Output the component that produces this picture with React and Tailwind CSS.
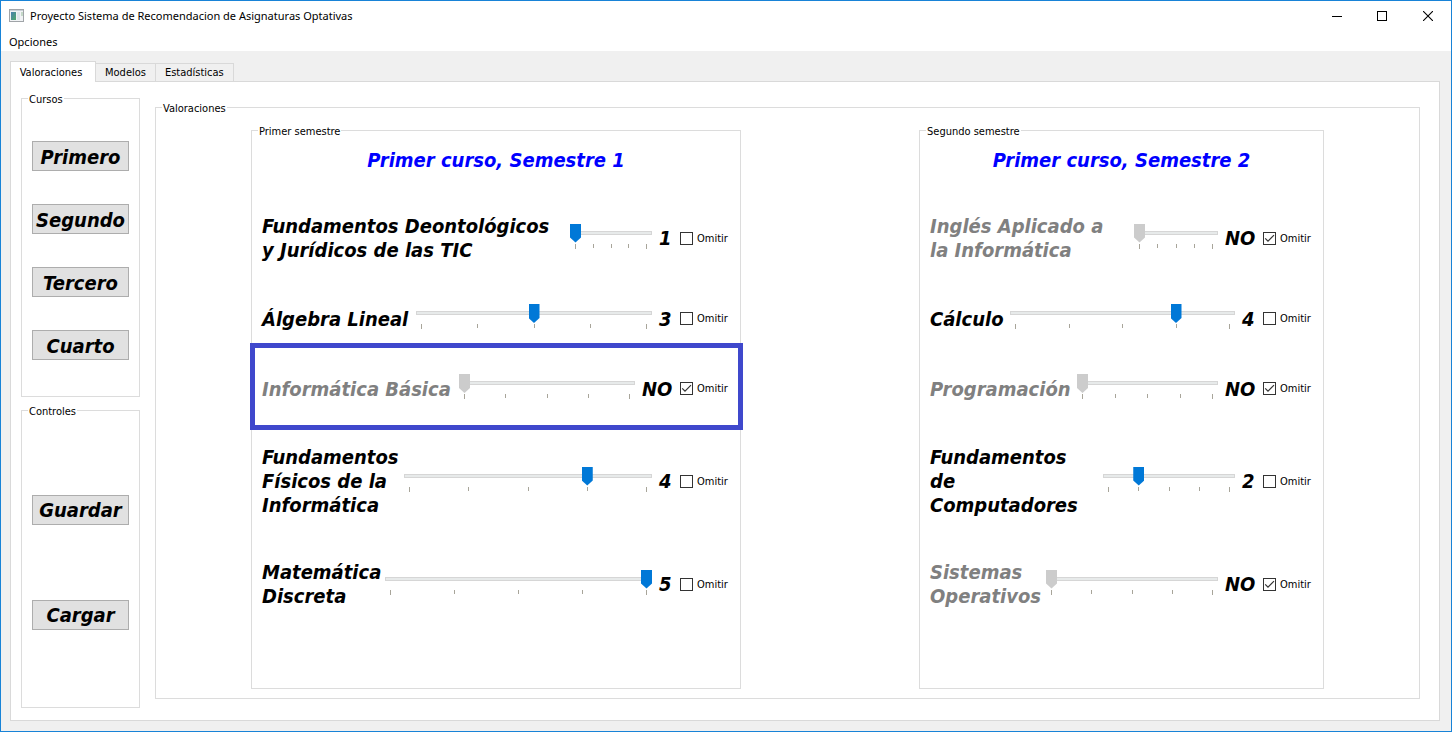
import { useState } from "react";

const COURSES = ["Primero", "Segundo", "Tercero", "Cuarto"];
const CONTROLS = ["Guardar", "Cargar"];
const TABS = ["Valoraciones", "Modelos", "Estadísticas"];

const FIRST_SEMESTER = [
  { id: "deontologia", lines: ["Fundamentos Deontológicos", "y Jurídicos de las TIC"], width: "w-[301px]", value: 1 },
  { id: "algebra", lines: ["Álgebra Lineal"], width: "w-[147px]", value: 3 },
  { id: "informatica", lines: ["Informática Básica"], width: "w-[190px]", value: 1, skipped: true, highlighted: true },
  { id: "fisica", lines: ["Fundamentos", "Físicos de la", "Informática"], width: "w-[135px]", value: 4 },
  { id: "discreta", lines: ["Matemática", "Discreta"], width: "w-[116px]", value: 5 },
];

const SECOND_SEMESTER = [
  { id: "ingles", lines: ["Inglés Aplicado a", "la Informática"], width: "w-[197px]", value: 1, skipped: true },
  { id: "calculo", lines: ["Cálculo"], width: "w-[73px]", value: 4 },
  { id: "programacion", lines: ["Programación"], width: "w-[140px]", value: 1, skipped: true },
  { id: "computadores", lines: ["Fundamentos", "de", "Computadores"], width: "w-[166px]", value: 2 },
  { id: "operativos", lines: ["Sistemas", "Operativos"], width: "w-[109px]", value: 1, skipped: true },
];

function GroupBox({ title, className = "", children }) {
  return (
    <fieldset className={`min-w-0 border border-[#dcdcdc] ${className}`}>
      <legend className="ml-[6px] h-[15px] px-px text-[11px] leading-[17px]">{title}</legend>
      {children}
    </fieldset>
  );
}

function BigButton({ children }) {
  return (
    <button
      type="button"
      className="flex h-[30px] w-full items-center justify-center border border-[#adadad] bg-[#e1e1e1] pt-px text-[20px] leading-[24px] font-bold whitespace-nowrap italic"
    >
      {children}
    </button>
  );
}

function Slider({ id, value, disabled, onChange }) {
  return (
    <div className="-mt-1 h-[25px] min-w-0 flex-1">
      <input
        id={id}
        type="range"
        min="1"
        max="5"
        value={value}
        disabled={disabled}
        onChange={(e) => onChange(Number(e.target.value))}
        className="block h-[18px] w-full appearance-none bg-transparent [&::-webkit-slider-runnable-track]:h-[4px] [&::-webkit-slider-runnable-track]:bg-[#e7eaea] [&::-webkit-slider-runnable-track]:shadow-[inset_0_0_0_1px_#d6d6d6] [&::-webkit-slider-thumb]:-mt-[7px] [&::-webkit-slider-thumb]:h-[19px] [&::-webkit-slider-thumb]:w-[11px] [&::-webkit-slider-thumb]:appearance-none [&::-webkit-slider-thumb]:bg-[#0078d7] [&::-webkit-slider-thumb]:[clip-path:polygon(0_0,100%_0,100%_74%,50%_100%,0_74%)] disabled:[&::-webkit-slider-thumb]:bg-[#cccccc]"
      />
      <div className="flex justify-between px-[5px] pt-[2px]">
        <span className="h-[5px] w-px bg-[#a8a59a]" />
        <span className="h-[4px] w-px bg-[#a8a59a]" />
        <span className="h-[4px] w-px bg-[#a8a59a]" />
        <span className="h-[4px] w-px bg-[#a8a59a]" />
        <span className="h-[5px] w-px bg-[#a8a59a]" />
      </div>
    </div>
  );
}

function SubjectRow({ subject }) {
  const [value, setValue] = useState(subject.value);
  const [skipped, setSkipped] = useState(Boolean(subject.skipped));
  return (
    <div className="relative flex min-h-[27px] items-center">
      <label
        htmlFor={subject.id}
        className={`mr-[7px] shrink-0 text-[20px] leading-[24px] font-bold whitespace-nowrap italic ${subject.width} ${skipped ? "text-[#808080]" : "text-black"}`}
      >
        {subject.lines.map((line) => (
          <span key={line} className="block">{line}</span>
        ))}
      </label>
      <Slider id={subject.id} value={value} disabled={skipped} onChange={setValue} />
      <output
        htmlFor={subject.id}
        className={`mr-[6px] ml-[7px] shrink-0 text-[20px] leading-[24px] font-bold italic ${skipped ? "w-[32px]" : "w-[15px]"}`}
      >
        {skipped ? "NO" : value}
      </output>
      <label className="flex shrink-0 items-center gap-[4px] text-[11px] leading-[13px]">
        <span className="relative block size-[13px]">
          <input
            type="checkbox"
            checked={skipped}
            onChange={(e) => setSkipped(e.target.checked)}
            className="block size-[13px] appearance-none border border-[#333333] bg-white"
          />
          {skipped && (
            <svg viewBox="0 0 13 13" className="pointer-events-none absolute inset-0 size-[13px]" fill="none" stroke="#333333" strokeWidth="1.2">
              <path d="M2.2 6.3 5 9.2 11 3.2" />
            </svg>
          )}
        </span>
        <span className="w-[29px] whitespace-nowrap">Omitir</span>
      </label>
      {subject.highlighted && (
        <div className="pointer-events-none absolute -top-8 -right-[17px] -bottom-7 -left-3 border-[5px] border-[#3f48cc]" />
      )}
    </div>
  );
}

function Semester({ title, heading, subjects }) {
  return (
    <GroupBox title={title}>
      <h2 className="pt-[10px] text-center text-[20px] leading-[24px] font-bold text-[#0000ff] italic">{heading}</h2>
      <div className="mt-[42px] flex flex-col gap-[43px] pr-[14px] pl-[10px]">
        {subjects.map((s) => (
          <SubjectRow key={s.id} subject={s} />
        ))}
      </div>
    </GroupBox>
  );
}

function AppIcon() {
  return (
    <svg width="16" height="14" viewBox="0 0 16 14">
      <defs>
        <linearGradient id="pane" x1="0" y1="0" x2="1" y2="1">
          <stop offset="0" stopColor="#4a7fb0" />
          <stop offset="1" stopColor="#4fa869" />
        </linearGradient>
      </defs>
      <rect x="0.5" y="0.5" width="14" height="12" fill="#f1f3f5" stroke="#a0a4a8" />
      <path d="M1 1.5h13" stroke="#c9d0d6" />
      <rect x="2" y="3" width="5" height="8" fill="url(#pane)" />
      <rect x="8" y="3" width="3" height="8" fill="#dfe5ea" />
      <rect x="12" y="3" width="2" height="4" fill="#c4d8c8" />
    </svg>
  );
}

export default function App() {
  const [tab, setTab] = useState(0);
  return (
    <div className="flex min-h-screen flex-col border border-[#1883d7] bg-[#f0f0f0] font-['DejaVu_Sans_Condensed','DejaVu_Sans',sans-serif] text-black">
      <header className="bg-white font-['Noto_Sans','Open_Sans',sans-serif] text-[11px]">
        <div className="flex h-[30px] items-center pl-2">
          <AppIcon />
          <h1 className="ml-[5px] flex-1 leading-[16px]">Proyecto Sistema de Recomendacion de Asignaturas Optativas</h1>
          <button type="button" aria-label="Minimizar" className="flex h-[29px] w-[45px] items-center justify-center">
            <svg width="10" height="10" shapeRendering="crispEdges"><path d="M0 5.5h10" stroke="#000" /></svg>
          </button>
          <button type="button" aria-label="Maximizar" className="flex h-[29px] w-[46px] items-center justify-center">
            <svg width="10" height="10" shapeRendering="crispEdges"><path d="M.5.5h9v9h-9z" fill="none" stroke="#000" /></svg>
          </button>
          <button type="button" aria-label="Cerrar" className="flex h-[29px] w-[46px] items-center justify-center">
            <svg width="10" height="10"><path d="M0 0l10 10M10 0L0 10" stroke="#000" strokeWidth="1.1" /></svg>
          </button>
        </div>
        <nav className="flex h-5 items-end pl-2">
          <button type="button" className="leading-[18px]">Opciones</button>
        </nav>
      </header>

      <main className="flex flex-1 flex-col pt-[10px] pr-[11px] pb-[10px] pl-[9px]">
        <div role="tablist" className="relative -mb-px flex items-end text-[11px] leading-[17px]">
          {TABS.map((name, i) => (
            <button
              key={name}
              type="button"
              role="tab"
              aria-selected={tab === i}
              onClick={() => setTab(i)}
              className={
                tab === i
                  ? "h-[21px] w-[86px] border border-b-0 border-[#d9d9d9] bg-white pr-1"
                  : "h-[19px] border border-l-0 border-[#d9d9d9] bg-[#f0f0f0] px-[9px]"
              }
            >
              {name}
            </button>
          ))}
        </div>

        <div className="flex flex-1 border border-[#d9d9d9] bg-white pr-[19px] pl-[10px]">
          <aside className="mr-[15px] flex w-[119px] flex-col gap-[6px] pt-[9px] pb-3">
            <GroupBox title="Cursos" className="flex-1">
              <div className="flex h-full flex-col justify-center gap-[33px] px-[10px]">
                {COURSES.map((c) => (
                  <BigButton key={c}>{c}</BigButton>
                ))}
              </div>
            </GroupBox>
            <GroupBox title="Controles" className="flex-1">
              <div className="flex h-full flex-col justify-center gap-[75px] px-[10px]">
                {CONTROLS.map((c) => (
                  <BigButton key={c}>{c}</BigButton>
                ))}
              </div>
            </GroupBox>
          </aside>

          <section className="flex min-w-0 flex-1 flex-col pt-[18px] pb-[21px]">
            <GroupBox title="Valoraciones" className="flex-1">
              <div className="grid h-full grid-cols-[490fr_405fr] gap-[178px] px-[95px] pt-2 pb-[9px]">
                <Semester title="Primer semestre" heading="Primer curso, Semestre 1" subjects={FIRST_SEMESTER} />
                <Semester title="Segundo semestre" heading="Primer curso, Semestre 2" subjects={SECOND_SEMESTER} />
              </div>
            </GroupBox>
          </section>
        </div>
      </main>
    </div>
  );
}
